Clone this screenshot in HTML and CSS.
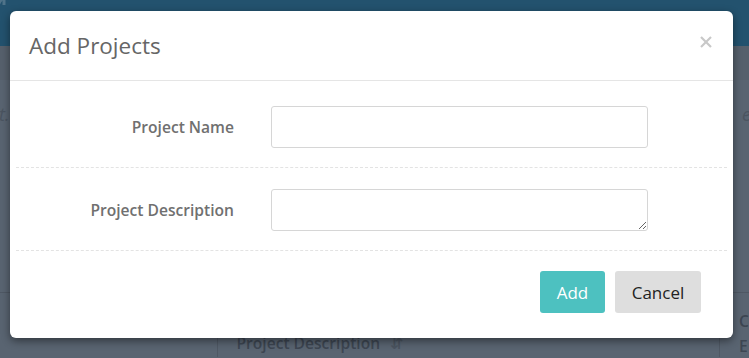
FILE: index.html
```html
<html>
<head>
	<title>Add Projects</title>
	<link rel="stylesheet" href="styles.css">
</head>
<body>

<div class="page">
	<div class="topbar">
		<svg class="logo" width="40" height="30" viewBox="0 0 40 30">
			<path d="M-2 12 A14 14 0 0 1 20 -2" fill="none" stroke="#4f7389" stroke-width="3"/>
			<line x1="4" y1="-4" x2="4" y2="5" stroke="#4f7389" stroke-width="3"/>
		</svg>
	</div>
	<div class="subbar"></div>
	<div class="hint">
		<span class="hint-left">rt.</span>
		<span class="hint-right">ec</span>
	</div>
	<div class="grid-head">
		<div class="cell cell-first"></div>
		<div class="cell cell-mid">Project Description <span class="sort">&#8693;</span></div>
		<div class="cell cell-last">C<br>E</div>
	</div>
</div>

<div class="modal">
	<div class="modal-header">
		<h4 class="modal-title">Add Projects</h4>
		<svg class="close" width="12" height="12" viewBox="0 0 12 12">
			<line x1="1" y1="1" x2="11" y2="11" stroke="#c8c8c8" stroke-width="2.2"/>
			<line x1="11" y1="1" x2="1" y2="11" stroke="#c8c8c8" stroke-width="2.2"/>
		</svg>
	</div>
	<div class="modal-body">
		<div class="form-row">
			<label class="form-label">Project Name</label>
			<input class="form-input" type="text">
		</div>
		<div class="form-row">
			<label class="form-label">Project Description</label>
			<textarea class="form-input form-area"></textarea>
		</div>
	</div>
	<div class="modal-footer">
		<button class="btn btn-add">Add</button>
		<button class="btn btn-cancel">Cancel</button>
	</div>
</div>

</body>
</html>
```

FILE: styles.css
```css
body {
	margin: 0;
	height: 358px;
	overflow: hidden;
	font-family: "Open Sans", "DejaVu Sans", sans-serif;
	background: #596471;
}

/* page behind the dialog */
.topbar {
	height: 46px;
	background: #23526e;
	overflow: hidden;
}
.logo {
	display: block;
}
.subbar {
	height: 34px;
	background: #56606c;
}
.hint {
	display: flex;
	justify-content: space-between;
	margin: 0 -10px 0 -8px;
	padding-top: 22px;
	height: 190px;
	font-size: 18px;
	font-style: italic;
	color: #4b5460;
	border-bottom: 1px solid #4f5864;
	box-sizing: content-box;
}
.grid-head {
	display: flex;
	height: 64px;
}
.cell {
	font-size: 15.6px;
	font-weight: 600;
	color: #3d4652;
}
.cell-first {
	width: 219px;
	border-right: 1px solid #4f5864;
}
.cell-mid {
	width: 486px;
	padding: 39px 0 0 18px;
	border-right: 1px solid #4f5864;
}
.cell-last {
	padding: 16px 0 0 19px;
	line-height: 25px;
}
.sort {
	color: #4b5460;
	margin-left: 6px;
}

/* dialog */
.modal {
	position: absolute;
	top: 11px;
	left: 10px;
	width: 723px;
	background: #fff;
	border-radius: 6px;
	box-shadow: 0 3px 9px rgba(0,0,0,0.45);
}
.modal-header {
	height: 69px;
	padding: 0 21px 0 19px;
	display: flex;
	align-items: center;
	justify-content: space-between;
	border-bottom: 1px solid #e5e5e5;
}
.modal-title {
	margin: 0;
	font-size: 22.5px;
	font-weight: 400;
	color: #666;
}
.close {
	margin-top: -8px;
}
.modal-body {
	padding: 4px 6px 0;
}
.form-row {
	display: grid;
	grid-template-columns: 218px 377px;
	column-gap: 37px;
	align-items: center;
	padding: 21px 0 19px;
	border-bottom: 1px dashed #e3e3e3;
}
.form-label {
	text-align: right;
	font-size: 15.6px;
	font-weight: 600;
	color: #707070;
}
.form-input {
	display: block;
	width: 377px;
	height: 42px;
	box-sizing: border-box;
	border: 1px solid #d6d6d6;
	border-radius: 3px;
	background: #fff;
	margin: 0;
	font-family: "Open Sans", sans-serif;
	font-size: 15px;
}
.form-area {
	resize: both;
}
.modal-footer {
	display: flex;
	justify-content: flex-end;
	gap: 10px;
	padding: 20px 32px 25px;
}
.btn {
	height: 42px;
	padding: 0 16px;
	border: 0;
	border-radius: 3px;
	font-family: "Open Sans", sans-serif;
	font-size: 17px;
}
.btn-add {
	width: 65px;
	background: #4dc1c0;
	color: #fff;
}
.btn-cancel {
	width: 86px;
	background: #dedede;
	color: #222;
}
```
